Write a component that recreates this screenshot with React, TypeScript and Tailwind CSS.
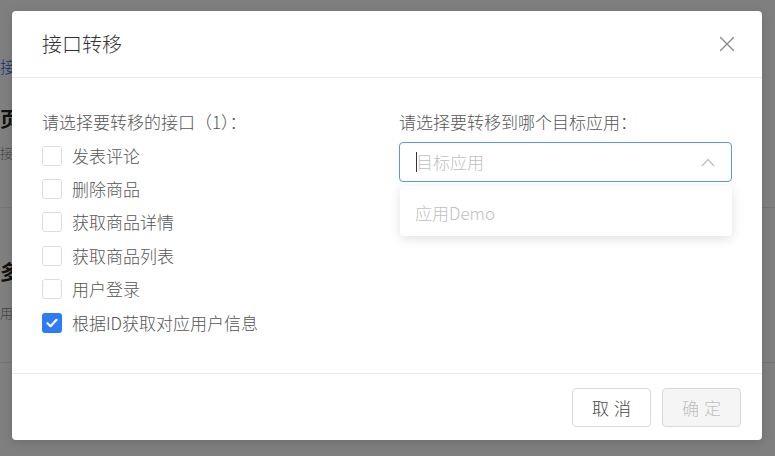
import React from "react";

const font = { fontFamily: '"Noto Sans CJK SC", "Noto Sans", sans-serif' };

const items = [
  { label: "发表评论", checked: false },
  { label: "删除商品", checked: false },
  { label: "获取商品详情", checked: false },
  { label: "获取商品列表", checked: false },
  { label: "用户登录", checked: false },
  { label: "根据ID获取对应用户信息", checked: true },
];

function Checkbox({ checked }: { checked: boolean }) {
  if (checked) {
    return (
      <span className="flex h-[20px] w-[20px] shrink-0 items-center justify-center rounded-[3px] bg-[#2f7bf5]">
        <svg width="12" height="10" viewBox="0 0 12 10">
          <path d="M1.5 5.2 L4.6 8.2 L10.5 1.8" fill="none" stroke="#fff" strokeWidth="2.2" strokeLinecap="round" strokeLinejoin="round" />
        </svg>
      </span>
    );
  }
  return <span className="h-[20px] w-[20px] shrink-0 rounded-[3px] border border-[#dcdcdc] bg-white" />;
}

export default function App() {
  return (
    <div className="relative h-[456px] w-[775px] overflow-hidden bg-white font-light" style={font}>
      {/* background page */}
      <div className="flex flex-col">
        <div className="h-[54px]" />
        <div className="h-[24px] text-[16px] leading-[24px] text-[#1d5fd6]">接</div>
        <div className="h-[27px]" />
        <div className="h-[28px] text-[20px] font-bold leading-[28px] text-[#222]">页</div>
        <div className="h-[10px]" />
        <div className="h-[20px] text-[13px] leading-[20px] text-[#888]">接口</div>
        <div className="h-[44px]" />
        <div className="h-px bg-[#e8e8e8]" />
        <div className="h-[50px]" />
        <div className="h-[28px] text-[20px] font-bold leading-[28px] text-[#222]">多</div>
        <div className="h-[17px]" />
        <div className="h-[20px] text-[13px] leading-[20px] text-[#888]">用接</div>
        <div className="h-[39px]" />
        <div className="h-px bg-[#e8e8e8]" />
      </div>

      {/* overlay */}
      <div className="absolute inset-0 bg-black/50" />

      {/* modal */}
      <div className="absolute left-[12px] top-[11px] flex h-[429px] w-[750px] flex-col rounded-[4px] bg-white shadow-[0_2px_10px_rgba(0,0,0,0.15)]">
        <div className="flex h-[67px] shrink-0 items-center justify-between border-b border-[#e8e8e8] pl-[30px] pr-[27px]">
          <span className="text-[20px] text-[#333]">接口转移</span>
          <svg width="16" height="16" viewBox="0 0 16 16">
            <path d="M1.5 1.5 L14.5 14.5 M14.5 1.5 L1.5 14.5" stroke="#8c8c8c" strokeWidth="1.4" strokeLinecap="round" />
          </svg>
        </div>

        <div className="grid flex-1 grid-cols-2 gap-[24px] border-b border-[#e8e8e8] px-[30px] pt-[32px]">
          <div className="flex flex-col">
            <div className="h-[24px] text-[17px] leading-[24px] text-[#555]">请选择要转移的接口（1）：</div>
            <div className="mt-[5px] flex flex-col">
              {items.map((it) => (
                <div key={it.label} className="flex h-[33.4px] items-center gap-[10px]">
                  <Checkbox checked={it.checked} />
                  <span className="text-[17px] leading-[24px] text-[#555]">{it.label}</span>
                </div>
              ))}
            </div>
          </div>
          <div className="flex flex-col">
            <div className="h-[24px] text-[17px] leading-[24px] text-[#555]">请选择要转移到哪个目标应用：</div>
            <div className="relative mt-[8px]">
              <div className="flex h-[40px] items-center justify-between rounded-[4px] border border-[#5b95f6] pl-[16px] pr-[16px]">
                <span className="flex items-center text-[17px] text-[#c0c0c0]">
                  <span className="mr-[-1px] inline-block h-[20px] w-px bg-[#333]" />
                  目标应用
                </span>
                <svg width="14" height="9" viewBox="0 0 14 9">
                  <path d="M1 8 L7 1.5 L13 8" fill="none" stroke="#c0c0c0" strokeWidth="1.3" />
                </svg>
              </div>
              <div className="absolute left-[1px] right-0 top-[44px] flex h-[50px] items-center rounded-[4px] bg-white pl-[15px] pt-[4px] shadow-[0_3px_12px_rgba(0,0,0,0.12)]">
                <span className="text-[17px] text-[#c0c0c0]">应用Demo</span>
              </div>
            </div>
          </div>
        </div>

        <div className="flex h-[66px] shrink-0 items-start justify-end gap-[11px] pr-[21px] pt-[14px]">
          <button className="flex h-[39px] w-[79px] items-center justify-center rounded-[4px] border border-[#d9d9d9] bg-white text-[17px] tracking-[5px] text-[#444]">
            <span className="mr-[-5px]">取消</span>
          </button>
          <button className="flex h-[39px] w-[79px] items-center justify-center rounded-[4px] border border-[#d9d9d9] bg-[#f5f5f5] text-[17px] tracking-[5px] text-[#bfbfbf]">
            <span className="mr-[-5px]">确定</span>
          </button>
        </div>
      </div>
    </div>
  );
}
